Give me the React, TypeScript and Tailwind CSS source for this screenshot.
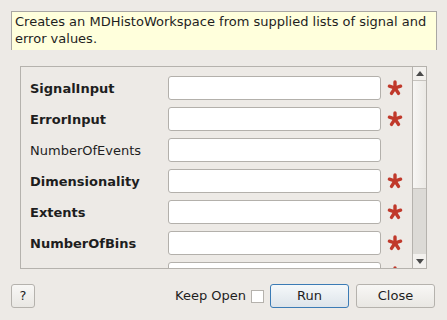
import React from "react";

const rows = [
  { name: "SignalInput", bold: true, required: true },
  { name: "ErrorInput", bold: true, required: true },
  { name: "NumberOfEvents", bold: false, required: false },
  { name: "Dimensionality", bold: true, required: true },
  { name: "Extents", bold: true, required: true },
  { name: "NumberOfBins", bold: true, required: true },
  { name: "", bold: true, required: true },
];

function Star() {
  return (
    <svg width="16" height="16" viewBox="0 0 16 16" className="shrink-0">
      <g stroke="#c0392b" strokeWidth="3.4" strokeLinecap="round">
        <line x1="8" y1="2" x2="8" y2="8" />
        <line x1="8" y1="8" x2="2.4" y2="6.2" />
        <line x1="8" y1="8" x2="13.6" y2="6.2" />
        <line x1="8" y1="8" x2="4.5" y2="13.4" />
        <line x1="8" y1="8" x2="11.5" y2="13.4" />
      </g>
    </svg>
  );
}

export default function App() {
  return (
    <div
      className="relative h-[320px] w-[447px] overflow-hidden bg-[#edeae6] text-[13px] text-[#1e1e1e]"
      style={{ fontFamily: '"DejaVu Sans", sans-serif' }}
    >
      <div className="ml-[11px] mt-[11px] h-[39px] w-[426px] border-x border-t border-[#a9a7a3] bg-[#ffffdc] px-[3px] pt-[1px] leading-[17px]">
        Creates an MDHistoWorkspace from supplied lists of signal and error values.
      </div>

      <div className="ml-[20px] mt-[16px] flex h-[203px] w-[407px] border border-[#b5b2ad]">
        <div className="flex-1 overflow-hidden pl-[9px] pt-[9px]">
          {rows.map((r, i) => (
            <div key={i} className="mb-[7px] flex h-[24px] items-center">
              <span className={`w-[138px] pt-[1px] ${r.bold ? "font-bold" : ""}`}>{r.name}</span>
              <div className="h-[24px] w-[213px] rounded-[3px] border border-[#b3b0ab] bg-white" />
              <div className="ml-[6px] flex w-[16px] justify-center">{r.required && <Star />}</div>
            </div>
          ))}
        </div>
        <div className="flex w-[14px] flex-col border-l border-[#b5b2ad] bg-[#dcdad6]">
          <div className="flex h-[14px] items-center justify-center border-b border-[#c6c3be] bg-[#f3f1ee]">
            <svg width="8" height="5" viewBox="0 0 8 5">
              <path d="M0 5 L4 0 L8 5 Z" fill="#4a4a4a" />
            </svg>
          </div>
          <div className="h-[108px] border-b border-[#c6c3be] bg-gradient-to-r from-[#f7f6f4] to-[#ebe9e5]" />
          <div className="flex-1" />
          <div className="flex h-[14px] items-center justify-center bg-[#f3f1ee]">
            <svg width="8" height="5" viewBox="0 0 8 5">
              <path d="M0 0 L8 0 L4 5 Z" fill="#4a4a4a" />
            </svg>
          </div>
        </div>
      </div>

      <div className="mt-[15px] flex h-[24px] items-center pl-[11px] pr-[12px]">
        <button className="flex h-[24px] w-[24px] items-center justify-center rounded-[3px] border border-[#b5b2ad] bg-gradient-to-b from-[#f8f7f5] to-[#e9e7e3] text-[13px]">
          ?
        </button>
        <div className="flex-1" />
        <span>Keep Open</span>
        <div className="ml-[5px] h-[13px] w-[13px] border border-[#b5b2ad] bg-white" />
        <button className="ml-[6px] h-[24px] w-[79px] rounded-[3px] border border-[#3b7bb5] bg-gradient-to-b from-[#f5f8fa] to-[#dde4ea] text-[13px]">
          Run
        </button>
        <button className="ml-[7px] h-[24px] w-[79px] rounded-[3px] border border-[#b5b2ad] bg-gradient-to-b from-[#f8f7f5] to-[#e9e7e3] text-[13px]">
          Close
        </button>
      </div>
    </div>
  );
}
